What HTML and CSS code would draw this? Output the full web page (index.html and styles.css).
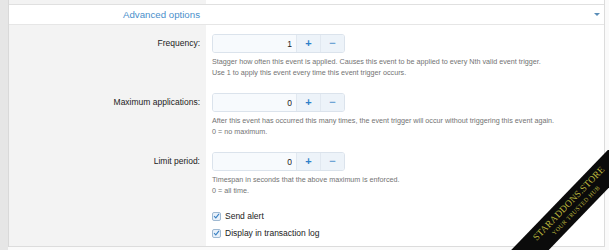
FILE: index.html
```html
<!DOCTYPE html>
<html lang="en">
  <head>
    <meta charset="UTF-8" />
    <meta name="viewport" content="width=device-width, initial-scale=1.0" />
    <title>Advanced options</title>
    <link rel="stylesheet" href="styles.css">
  </head>
  <body>
    <div class="frame">
      <div class="row row-top">
        <div class="label"></div>
        <div class="value"></div>
      </div>

      <div class="section-head">
        <span class="section-title">Advanced options</span>
        <span class="section-toggle"></span>
      </div>

      <div class="row field">
        <div class="label">Frequency:</div>
        <div class="value">
          <div class="spinner">
            <input class="spinner-input" type="text" value="1" />
            <button class="spinner-btn plus">+</button>
            <button class="spinner-btn minus">&minus;</button>
          </div>
          <p class="hint">
            Stagger how often this event is applied. Causes this event to be applied to every Nth valid event trigger.<br />
            Use 1 to apply this event every time this event trigger occurs.
          </p>
        </div>
      </div>

      <div class="row field">
        <div class="label">Maximum applications:</div>
        <div class="value">
          <div class="spinner">
            <input class="spinner-input" type="text" value="0" />
            <button class="spinner-btn plus">+</button>
            <button class="spinner-btn minus">&minus;</button>
          </div>
          <p class="hint">
            After this event has occurred this many times, the event trigger will occur without triggering this event again.<br />
            0 = no maximum.
          </p>
        </div>
      </div>

      <div class="row field">
        <div class="label">Limit period:</div>
        <div class="value">
          <div class="spinner">
            <input class="spinner-input" type="text" value="0" />
            <button class="spinner-btn plus">+</button>
            <button class="spinner-btn minus">&minus;</button>
          </div>
          <p class="hint">
            Timespan in seconds that the above maximum is enforced.<br />
            0 = all time.
          </p>
        </div>
      </div>

      <div class="row row-checks">
        <div class="label"></div>
        <div class="value">
          <label class="check">
            <span class="box">
              <svg viewBox="0 0 10 10" width="8" height="8"><path d="M1.5 5.2 L4 7.6 L8.6 2" fill="none" stroke="#3b82c4" stroke-width="1.6"/></svg>
            </span>
            Send alert
          </label>
          <label class="check">
            <span class="box">
              <svg viewBox="0 0 10 10" width="8" height="8"><path d="M1.5 5.2 L4 7.6 L8.6 2" fill="none" stroke="#3b82c4" stroke-width="1.6"/></svg>
            </span>
            Display in transaction log
          </label>
        </div>
      </div>
    </div>

    <div class="corner">
      <div class="ribbon">
        <span class="ribbon-main">STARADDONS.STORE</span>
        <span class="ribbon-sub">Your Trusted Hub</span>
      </div>
    </div>
  </body>
</html>
```

FILE: styles.css
```css
:root {
  font-family: "Liberation Sans", Arial, sans-serif;
  font-size: 8.5px;
  color: #222;
}

body {
  margin: 0;
  height: 250px;
  overflow: hidden;
  position: relative;
  background: linear-gradient(to right, #e6e6e6 8px, #fafafa 8px);
}

.frame {
  margin-left: 8px;
  width: 595px;
  border-left: 1px solid #d9d9d9;
  border-right: 1px solid #dcdcdc;
  background: #fff;
}

.row {
  display: grid;
  grid-template-columns: 197px 1fr;
}

.label {
  background: #f3f3f3;
  text-align: right;
  padding-right: 6px;
}

.value {
  padding-left: 6px;
}

.row-top {
  height: 4px;
  border-bottom: 1px solid #e0e0e0;
}

.section-head {
  display: flex;
  align-items: center;
  height: 19px;
  border-bottom: 1px solid #e6e6e6;
}

.section-title {
  width: 191px;
  text-align: right;
  font-size: 9.7px;
  color: #4a8fcb;
}

.section-toggle {
  margin-left: auto;
  margin-right: 4px;
  width: 0;
  height: 0;
  border-left: 3px solid transparent;
  border-right: 3px solid transparent;
  border-top: 3px solid #5a8db8;
}

.field {
  height: 59px;

  & .label {
    padding-top: 13px;
    box-sizing: border-box;
  }

  & .value {
    padding-top: 9px;
  }
}

.spinner {
  display: flex;
  width: 133px;
  height: 19px;
  box-sizing: border-box;
  border: 1px solid #dbe3ec;
  border-radius: 3px;
  overflow: hidden;
}

.spinner-input {
  width: 83px;
  box-sizing: border-box;
  margin: 0;
  border: 0;
  padding: 0 4px 0 0;
  text-align: right;
  font: inherit;
  color: #222;
  background: #f7fafd;
}

.spinner-btn {
  width: 25px;
  margin: 0;
  padding: 0;
  border: 0;
  border-left: 1px solid #e1e8f0;
  background: #edf3f9;
  font-family: inherit;
  font-weight: 700;
  font-size: 11px;
  line-height: 1;
  cursor: pointer;

  &.plus {
    color: #2f80c9;
  }

  &.minus {
    color: #6fa4d4;
  }
}

.hint {
  margin: 3px 0 0;
  font-size: 7.2px;
  line-height: 11px;
  color: #737373;
}

.row-checks {
  height: 44px;
  border-bottom: 1px solid #dcdcdc;

  & .value {
    padding-top: 8px;
    display: flex;
    flex-direction: column;
    gap: 5px;
  }
}

.check {
  display: flex;
  align-items: center;
  gap: 4px;
  height: 12px;
  color: #222;
}

.box {
  display: inline-flex;
  align-items: center;
  justify-content: center;
  width: 9px;
  height: 9px;
  box-sizing: border-box;
  border: 1px solid #9fb9d2;
  border-radius: 2px;
  background: #e8f1fa;
}

/* watermark in the bottom-right corner */
.corner {
  position: absolute;
  right: 0;
  bottom: 0;
  width: 100px;
  height: 100px;
  overflow: hidden;
}

.ribbon {
  position: absolute;
  left: -12px;
  top: 43px;
  width: 150px;
  height: 27px;
  background: #0b0b0b;
  transform: rotate(-46deg);
  display: flex;
  flex-direction: column;
  align-items: center;
  justify-content: center;
  font-family: "Liberation Serif", serif;
  color: #bdb63c;
  line-height: 1;
}

.ribbon-main {
  font-size: 9.5px;
  letter-spacing: 0.2px;
}

.ribbon-sub {
  font-size: 6px;
  font-variant: small-caps;
  text-transform: uppercase;
  letter-spacing: 0.4px;
  margin-top: 2px;
}
```
